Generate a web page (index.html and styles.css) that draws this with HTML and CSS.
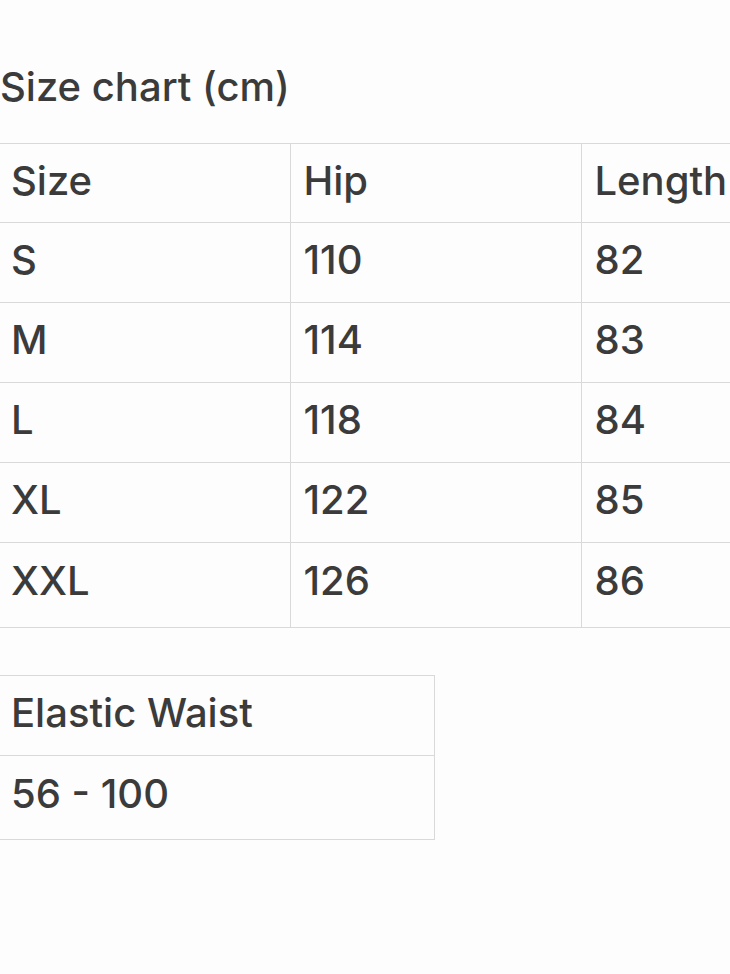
FILE: index.html
```html
<!DOCTYPE html>
<html lang="en">
<head>
<meta charset="utf-8">
<title>Size chart</title>
<link rel="stylesheet" href="styles.css">
</head>
<body>
<main class="page">
  <h1 class="title">Size chart (cm)</h1>
  <table class="chart">
    <thead>
      <tr><th>Size</th><th>Hip</th><th>Length</th></tr>
    </thead>
    <tbody>
      <tr><td>S</td><td>110</td><td>82</td></tr>
      <tr><td>M</td><td>114</td><td>83</td></tr>
      <tr><td>L</td><td>118</td><td>84</td></tr>
      <tr><td>XL</td><td>122</td><td>85</td></tr>
      <tr class="last"><td>XXL</td><td>126</td><td>86</td></tr>
    </tbody>
  </table>
  <table class="waist">
    <thead><tr><th>Elastic Waist</th></tr></thead>
    <tbody><tr class="last"><td>56 - 100</td></tr></tbody>
  </table>
</main>
</body>
</html>
```
FILE: styles.css
```css
html, body {
  margin: 0;
  padding: 0;
  background: #fdfdfd;
  overflow: hidden;
}
.page {
  width: 730px;
  height: 974px;
  overflow: hidden;
  font-family: "Inter", "Noto Sans", sans-serif;
  color: #3b3b3b;
}
.title {
  margin: 0;
  padding-top: 63px;
  height: 56px;
  font-size: 40px;
  font-weight: 500;
  line-height: 48px;
}
.chart, .waist {
  border-collapse: collapse;
  table-layout: fixed;
}
.chart {
  margin-top: 24px;
  width: 880px;
}
.chart th, .chart td,
.waist th, .waist td {
  border: 1px solid #d9d9d9;
  border-left: none;
  height: 80px;
  padding: 0 0 5px 11px;
  text-align: left;
  font-size: 40px;
  font-weight: 500;
  line-height: 48px;
  box-sizing: border-box;
  vertical-align: middle;
}
.chart th { height: 79px; }
.chart th + th, .chart td + td {
  border-left: 1px solid #d9d9d9;
  padding-left: 13px;
}
.chart th:nth-child(1), .chart td:nth-child(1) { width: 290px; }
.chart th:nth-child(2), .chart td:nth-child(2) { width: 291px; }
.chart tr.last td { height: 85px; padding-bottom: 8px; }
.waist {
  margin-top: 47px;
  width: 435px;
}
.waist th, .waist td {
  border-right: 1px solid #d9d9d9;
}
.waist tr.last td { height: 84px; padding-bottom: 8px; }
```
